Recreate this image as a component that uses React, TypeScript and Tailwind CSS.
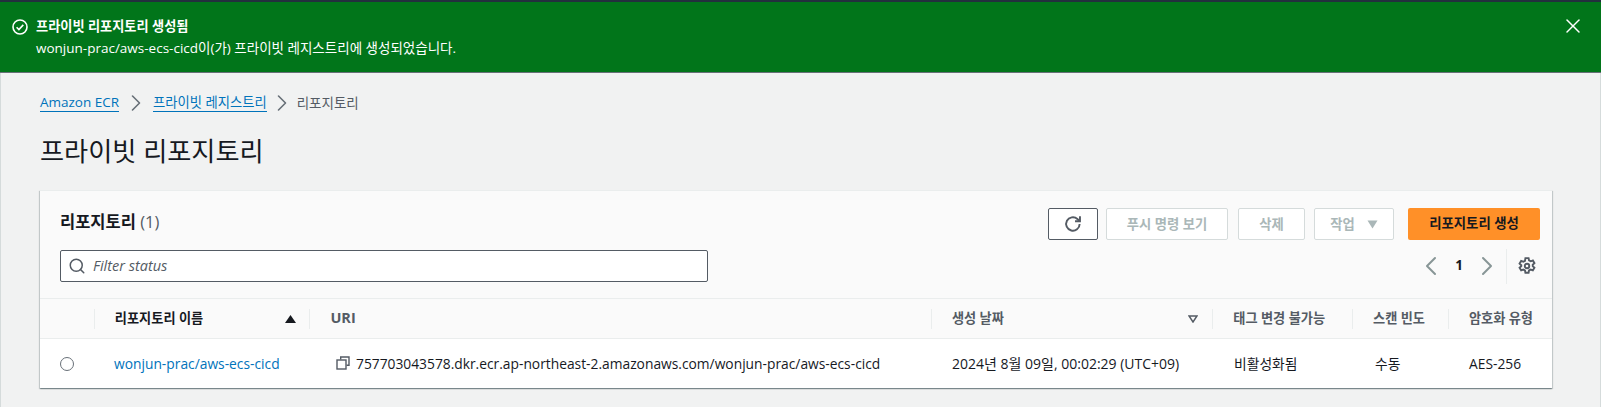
import { ChevronLeft, ChevronRight, Search, X } from "lucide-react";

const FONT = "[font-family:'Open_Sans','Noto_Sans_CJK_KR',sans-serif]";

function CheckCircle() {
  return (
    <svg width="16" height="16" viewBox="0 0 16 16" fill="none" stroke="white" strokeWidth="1.6">
      <circle cx="8" cy="8" r="7" />
      <path d="M4.6 8.2l2.3 2.3 4.4-4.6" />
    </svg>
  );
}

function Refresh() {
  return (
    <svg width="18" height="18" viewBox="0 0 16 16" fill="none" stroke="#545b64" strokeWidth="1.7">
      <path d="M13.9 8a6 6 0 1 1-2-4.5l2 1.9" />
      <path d="M14.2 1.2v4.4H9.8" />
    </svg>
  );
}

function Gear() {
  return (
    <svg width="18" height="18" viewBox="0 0 16 16" fill="none" stroke="#545b64" strokeWidth="1.7">
      <path d="M6.6 1h2.8l.4 2 1.5.8 1.9-.7 1.4 2.4-1.5 1.4v1.2l1.5 1.4-1.4 2.4-1.9-.7-1.5.8-.4 2H6.6l-.4-2-1.5-.8-1.9.7-1.4-2.4 1.5-1.4V7.3L1.4 5.9l1.4-2.4 1.9.7 1.5-.8z" />
      <circle cx="8" cy="8" r="2" />
    </svg>
  );
}

function Copy() {
  return (
    <svg width="14" height="14" viewBox="0 0 14 14" fill="none" stroke="#545b64" strokeWidth="1.4">
      <path d="M4.7 3.5V1h8.3v8.3h-2.5" />
      <rect x="1" y="4" width="9" height="9" />
    </svg>
  );
}

const columns = [
  { label: "리포지토리 이름", width: "w-[216px]", dark: true },
  { label: "URI", width: "w-[623px]" },
  { label: "생성 날짜", width: "w-[282px]" },
  { label: "태그 변경 불가능", width: "w-[140px]" },
  { label: "스캔 빈도", width: "w-[96px]" },
  { label: "암호화 유형", width: "flex-1" },
];

export default function App() {
  return (
    <div className={`${FONT} h-[407px] w-[1601px] overflow-hidden bg-[#f1f2f2] text-sm text-[#16191f]`}>
      <div className="h-[2px] bg-[#232f3e]" />

      {/* Flash */}
      <div className="flex h-[71px] items-start border-b border-[#687078] bg-[#01751a] pt-[14px] pr-[16px] pl-[12px] text-white">
        <div className="mt-[3px] mr-[8px]">
          <CheckCircle />
        </div>
        <div className="flex-1">
          <div className="text-[13.2px] leading-[20px] font-semibold">프라이빗 리포지토리 생성됨</div>
          <div className="mt-[2px] text-[13.5px] leading-[20px]">
            wonjun-prac/aws-ecs-cicd이(가) 프라이빗 레지스트리에 생성되었습니다.
          </div>
        </div>
        <X size={24} strokeWidth={1.5} className="mt-[-2px]" />
      </div>

      <div className="h-[334px] border-x border-[#d5dbdb] pt-[20px] pl-[39px]">
        {/* Breadcrumb */}
        <div className="flex h-[20px] items-center text-[13.5px] leading-[20px]">
          <a className="border-b border-[#0073bb] leading-[17px] text-[#0073bb]">Amazon ECR</a>
          <ChevronRight size={28} strokeWidth={1.4} className="mx-[3px] text-[#687078]" />
          <a className="border-b border-[#0073bb] text-[13.3px] leading-[17px] text-[#0073bb]">프라이빗 레지스트리</a>
          <ChevronRight size={28} strokeWidth={1.4} className="mx-[1px] text-[#687078]" />
          <span className="text-[#545b64]">리포지토리</span>
        </div>

        <h1 className="mt-[20px] text-[26.2px] leading-[36px] font-normal">프라이빗 리포지토리</h1>

        {/* Card */}
        <div className="mt-[21px] h-[198px] w-[1512px] border-t border-[#eaeded] bg-[#fafafa] shadow-[0_1px_1px_0_rgba(0,28,36,0.3),1px_1px_1px_0_rgba(0,28,36,0.15),-1px_1px_1px_0_rgba(0,28,36,0.15)]">
          <div className="flex h-[108px] border-b border-[#eaeded] pt-[17px] pr-[12px] pl-[20px]">
            <div className="flex-1">
              <h2 className="mt-[1px] text-[16.5px] leading-[26px] font-bold">
                리포지토리 <span className="font-normal text-[#545b64]">(1)</span>
              </h2>
              <div className="mt-[15px] flex h-[32px] w-[648px] items-center rounded-[2px] border border-[#545b64] bg-white pl-[7px]">
                <Search size={18} strokeWidth={2} className="text-[#545b64]" />
                <span className="ml-[7px] text-[14.5px] text-[#545b64] italic">Filter status</span>
              </div>
            </div>
            <div className="flex flex-col items-end">
              <div className="flex items-center">
                <button className="flex h-[32px] w-[50px] items-center justify-center rounded-[2px] border border-[#545b64] bg-white">
                  <Refresh />
                </button>
                <button className="ml-[8px] h-[32px] w-[122px] rounded-[2px] border border-[#d5dbdb] bg-white text-[13.3px] font-bold text-[#aab7b8]">
                  푸시 명령 보기
                </button>
                <button className="ml-[10px] h-[32px] w-[67px] rounded-[2px] border border-[#d5dbdb] bg-white text-[13.3px] font-bold text-[#aab7b8]">
                  삭제
                </button>
                <button className="ml-[9px] flex h-[32px] w-[80px] items-center justify-center gap-[12px] rounded-[2px] border border-[#d5dbdb] bg-white text-[13.3px] font-bold text-[#aab7b8]">
                  작업
                  <svg width="11" height="9" viewBox="0 0 11 9" fill="#aab7b8">
                    <path d="M0.5 0.5h10L5.5 8.5z" />
                  </svg>
                </button>
                <button className="ml-[14px] h-[32px] w-[132px] rounded-[2px] bg-[#ff9028] text-[13.4px] font-bold text-[#16191f]">
                  리포지토리 생성
                </button>
              </div>
              <div className="mt-[8px] flex h-[36px] items-center text-[#545b64]">
                <ChevronLeft size={32} strokeWidth={1.5} className="mx-[-4px] text-[#879596]" />
                <span className="mx-[12px] text-[13.5px] font-bold text-[#16191f]">1</span>
                <ChevronRight size={32} strokeWidth={1.5} className="mx-[-4px] text-[#879596]" />
                <div className="mr-[11px] ml-[7px] h-[35px] border-l border-[#eaeded]" />
                <div className="mr-[4px]">
                  <Gear />
                </div>
              </div>
            </div>
          </div>

          {/* Table header */}
          <div className="flex h-[40px] items-center border-b border-[#eaeded] text-[13.2px] font-bold text-[#545b64]">
            <div className="w-[54px]" />
            {columns.map((col) => (
              <div key={col.label} className={`${col.width} flex h-[20px] items-center border-l border-[#eaeded] pr-[19px] pl-[20px] whitespace-nowrap`}>
                <span className={`flex-1 ${col.label === "URI" ? "text-[14.5px]" : ""} ${col.dark ? "text-[#16191f]" : ""}`}>{col.label}</span>
                {col.label === "리포지토리 이름" && (
                  <svg width="11" height="8" viewBox="0 0 11 8" fill="#16191f" className="mr-[-6px]">
                    <path d="M5.5 0l5.5 8H0z" />
                  </svg>
                )}
                {col.label === "생성 날짜" && (
                  <svg width="10" height="8" viewBox="0 0 10 8" fill="none" stroke="#545b64" strokeWidth="1.5" className="mr-[-5px]">
                    <path d="M1 1h8L5 7z" />
                  </svg>
                )}
              </div>
            ))}
          </div>

          {/* Table row */}
          <div className="flex h-[49px] items-center bg-white text-[13.8px]">
            <div className="flex w-[54px] justify-center pl-[1px]">
              <div className="mr-[2px] h-[14px] w-[14px] rounded-full border border-[#687078] bg-white" />
            </div>
            <div className="w-[216px] pl-[20px] text-[#0073bb]">wonjun-prac/aws-ecs-cicd</div>
            <div className="flex w-[623px] items-center pl-[26px]">
              <Copy />
              <span className="ml-[6px]">757703043578.dkr.ecr.ap-northeast-2.amazonaws.com/wonjun-prac/aws-ecs-cicd</span>
            </div>
            <div className="w-[282px] pl-[19px] text-[14px]">2024년 8월 09일, 00:02:29 (UTC+09)</div>
            <div className="w-[140px] pl-[19px]">비활성화됨</div>
            <div className="w-[96px] pl-[20px]">수동</div>
            <div className="flex-1 pl-[18px]">AES-256</div>
          </div>
        </div>
      </div>
    </div>
  );
}
